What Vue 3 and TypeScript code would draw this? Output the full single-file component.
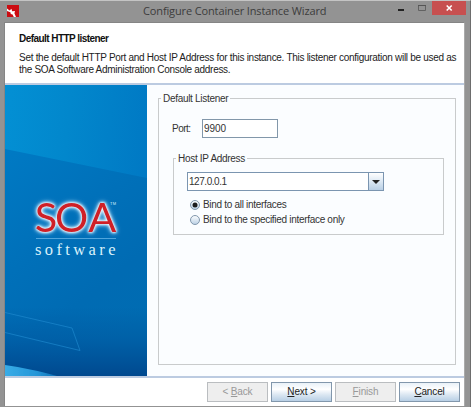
<script setup lang="ts">
import { ref } from 'vue'

interface WizardButton {
  key: string
  before: string
  mnemonic: string
  after: string
  enabled: boolean
}

const port = ref('9900')
const host = ref('127.0.0.1')
const binding = ref<'all' | 'one'>('all')

const options: { value: 'all' | 'one'; label: string }[] = [
  { value: 'all', label: 'Bind to all interfaces' },
  { value: 'one', label: 'Bind to the specified interface only' },
]

const buttons: WizardButton[] = [
  { key: 'back', before: '< ', mnemonic: 'B', after: 'ack', enabled: false },
  { key: 'next', before: '', mnemonic: 'N', after: 'ext >', enabled: true },
  { key: 'finish', before: '', mnemonic: 'F', after: 'inish', enabled: false },
  { key: 'cancel', before: '', mnemonic: 'C', after: 'ancel', enabled: true },
]
</script>

<template>
  <div class="window">
    <header class="titlebar">
      <svg class="app-icon" width="12" height="12" viewBox="0 0 12 12">
        <rect width="12" height="12" fill="#cb0c12" />
        <path d="M0 3.500 2.600 5.500 4.400 3.800 5.200 6.200 8 6 7.400 8.200 9 12H6.800L5.600 9.400 3.800 9 3.400 7.200 0 6Z" fill="#fff" />
      </svg>
      <h1 class="title">Configure Container Instance Wizard</h1>
      <div class="controls">
        <svg width="40" height="15" viewBox="0 0 40 15">
          <rect x="6" y="8" width="6" height="2" fill="#222" />
          <path d="M26.5 4.500h7v5h-7z" fill="none" stroke="#626262" />
          <path d="M26 4.500h8" stroke="#555" />
        </svg>
        <div class="close">
          <svg width="34" height="14" viewBox="0 0 34 14">
            <path d="m14.7 4.5 5 5m0-5-5 5" stroke="#fff" stroke-width="1.6" />
          </svg>
        </div>
      </div>
    </header>

    <main class="client">
      <section class="intro">
        <h2>Default HTTP listener</h2>
        <p class="l1">Set the default HTTP Port and Host IP Address for this instance. This listener configuration will be used as</p>
        <p class="l2">the SOA Software Administration Console address.</p>
      </section>

      <section class="body">
        <svg class="banner" width="142" height="292" viewBox="0 0 142 292">
          <defs>
            <linearGradient id="base" x1="0" y1="0" x2="1" y2="0.25">
              <stop offset="0" stop-color="#0390d4" />
              <stop offset="0.45" stop-color="#0287cc" />
              <stop offset="1" stop-color="#0079c4" />
            </linearGradient>
            <linearGradient id="lower" x1="0" y1="0" x2="0.5" y2="1">
              <stop offset="0" stop-color="#007ac4" />
              <stop offset="0.45" stop-color="#0070b9" />
              <stop offset="0.75" stop-color="#006bb3" />
              <stop offset="1" stop-color="#006cb2" />
            </linearGradient>
            <linearGradient id="shade" x1="0" y1="0" x2="0" y2="1">
              <stop offset="0" stop-color="#004c94" stop-opacity="0" />
              <stop offset="0.45" stop-color="#004c94" stop-opacity="0.35" />
              <stop offset="1" stop-color="#00468c" stop-opacity="0.95" />
            </linearGradient>
            <linearGradient id="wave" x1="0" y1="0" x2="1" y2="0">
              <stop offset="0" stop-color="#3aaee8" />
              <stop offset="0.5" stop-color="#2496d8" />
              <stop offset="1" stop-color="#00579f" />
            </linearGradient>
            <filter id="soft"><feGaussianBlur stdDeviation="0.7" /></filter>
          </defs>
          <rect width="142" height="292" fill="url(#base)" />
          <path d="M0 64 142 93V292H0Z" fill="url(#lower)" />
          <rect y="222" width="142" height="70" fill="url(#shade)" />
          <path d="M0 227.500 67 243 75 265.500 0 247.500" fill="none" stroke="#1f8bcf" stroke-opacity=".65" />
          <path d="M-3 279.500Q30 284 66 295H-3Z" fill="url(#wave)" filter="url(#soft)" />
          <text class="soa" x="29.800 50 83.200" y="146.500">SOA</text>
          <text class="tm" x="105" y="120" textLength="6">TM</text>
          <path d="M31 153.500h80" stroke="#4fa5dc" />
          <text class="software" x="30" y="170" textLength="80.500">software</text>
        </svg>

        <div class="panel">
          <fieldset class="outer">
            <legend>Default Listener</legend>
            <label class="port">
              <span>Port:</span>
              <input v-model="port" type="text" />
            </label>
            <fieldset class="inner">
              <legend>Host IP Address</legend>
              <div class="combo">
                <span class="value">{{ host }}</span>
                <span class="arrow">
                  <svg width="8" height="4" viewBox="0 0 8 4"><path d="M0 0h8L4 4Z" fill="#222" /></svg>
                </span>
              </div>
              <div v-for="o in options" :key="o.value" class="radio" :class="o.value" @click="binding = o.value">
                <svg width="10" height="10" viewBox="0 0 10 10">
                  <defs>
                    <linearGradient :id="'dot-' + o.value" x1="0" y1="0" x2="0" y2="1">
                      <stop offset="0" stop-color="#fff" />
                      <stop offset="1" stop-color="#b9cfe4" />
                    </linearGradient>
                  </defs>
                  <circle cx="5" cy="5" r="4.500" :fill="`url(#dot-${o.value})`" stroke="#8297ac" />
                  <circle v-if="binding === o.value" cx="5" cy="5" r="2.500" fill="#1c1c1c" />
                </svg>
                <span>{{ o.label }}</span>
              </div>
            </fieldset>
          </fieldset>
        </div>
      </section>

      <footer class="actions">
        <button v-for="b in buttons" :key="b.key" :disabled="!b.enabled">
          {{ b.before }}<u>{{ b.mnemonic }}</u>{{ b.after }}
        </button>
      </footer>
    </main>
  </div>
</template>

<style>
body {
  margin: 0;
  overflow: hidden;
}
</style>

<style scoped>
.window {
  box-sizing: border-box;
  width: 471px;
  height: 407px;
  padding: 0 5px 1px 4px;
  border-top: 1px solid #c4c4c4;
  border-right: 1px solid #6d6d6d;
  background: #939393;
  font-family: "Liberation Sans", Arial, sans-serif;
  font-size: 10px;
  letter-spacing: -0.3px;
  color: #333;
}
.titlebar {
  display: flex;
  align-items: flex-start;
  height: 21px;
}
.app-icon {
  flex: none;
  margin: 4px 0 0 3px;
}
.title {
  flex: none;
  margin: 1px 0 0 124px;
  width: 200px;
  font: 400 11px/17px "Open Sans", sans-serif;
  letter-spacing: -0.13px;
  white-space: nowrap;
  color: #3c3c3c;
}
.controls {
  display: flex;
  flex: none;
  margin-left: 49px;
}
.close {
  width: 34px;
  height: 14px;
  background: #c75050;
}
.controls svg {
  display: block;
}
.client {
  display: flex;
  flex-direction: column;
  box-sizing: border-box;
  width: 461px;
  height: 384px;
  border: 1px solid #858585;
  border-right-color: #aaa;
  border-bottom: 0;
  background: #fff;
}
.intro {
  box-sizing: border-box;
  height: 62px;
  padding: 9px 0 0 14px;
  border-bottom: 2px solid #bccbe1;
  white-space: nowrap;
  color: #222;
}
.intro h2 {
  margin: 0 0 7px;
  font-size: 10px;
  line-height: 13px;
  letter-spacing: -0.55px;
  color: #111;
}
.intro p {
  margin: 0;
  line-height: 12px;
}
.l1 {
  letter-spacing: -0.29px;
}
.body {
  display: flex;
  height: 291px;
  background: #fbfdff;
}
.banner {
  display: block;
  flex: none;
  letter-spacing: 0;
}
.soa {
  font: 400 41.500px Lato, sans-serif;
  fill: #cf2027;
  filter: drop-shadow(0 0 1px #fff) drop-shadow(0 0 1.500px #e6f5ff) drop-shadow(0 0 2px #9bd2f5);
}
.tm {
  font: 4px "Liberation Sans", sans-serif;
  fill: #d5ecfa;
}
.software {
  font: 16.500px "Liberation Serif", serif;
  fill: #d9f1fb;
}
.panel {
  padding: 7px 0 0 11px;
}
fieldset {
  box-sizing: border-box;
  min-width: 0;
  margin: 0;
  padding: 0;
  border: 1px solid #c9cbcc;
}
legend {
  margin: 0 0 0 2px;
  padding: 0 2px;
  line-height: 13px;
  white-space: nowrap;
}
.outer {
  width: 298px;
  height: 273px;
}
.port {
  display: flex;
  align-items: center;
  margin: 14px 0 0 13px;
  height: 19px;
}
.port span {
  width: 30px;
  letter-spacing: -0.5px;
}
.port input {
  box-sizing: border-box;
  width: 76px;
  height: 19px;
  padding: 0 0 0 1px;
  border: 1px solid #8297aa;
  border-radius: 0;
  outline: 0;
  background: #fff;
  font: inherit;
  letter-spacing: -0.1px;
  color: #333;
}
.inner {
  width: 271px;
  height: 83px;
  margin: 14px 0 0 14px;
}
.combo {
  display: flex;
  box-sizing: border-box;
  width: 197px;
  height: 19px;
  margin: 7px 0 0 13px;
  border: 1px solid #7b95b0;
  background: #fff;
  line-height: 17px;
}
.value {
  flex: 1;
  padding-left: 1px;
  letter-spacing: -0.45px;
}
.arrow {
  display: flex;
  align-items: center;
  justify-content: center;
  width: 14px;
  border-left: 1px solid #7b95b0;
  background: linear-gradient(#fff, #dce8f3 50%, #b9cfe5);
}
.radio {
  display: flex;
  align-items: center;
  height: 15px;
  margin-left: 16px;
  white-space: nowrap;
}
.radio.all {
  margin-top: 6px;
}
.radio span {
  margin-left: 3px;
}
.actions {
  display: flex;
  flex: 1;
  gap: 3px;
  justify-content: flex-end;
  box-sizing: border-box;
  padding: 4px 4px 0 0;
  border-top: 2px solid #bccbe1;
}
button {
  box-sizing: border-box;
  width: 61px;
  height: 20px;
  padding: 0;
  border: 1px solid #8297ac;
  border-radius: 0;
  background: linear-gradient(#e9f1f8, #fff 35%, #dbe7f2 65%, #b8cfe5);
  font: 10px/16px "Liberation Sans", Arial, sans-serif;
  letter-spacing: -0.15px;
  white-space: pre;
  color: #222;
}
button:disabled {
  border-color: #babdc0;
  background: #eee;
  color: #999;
}
</style>
